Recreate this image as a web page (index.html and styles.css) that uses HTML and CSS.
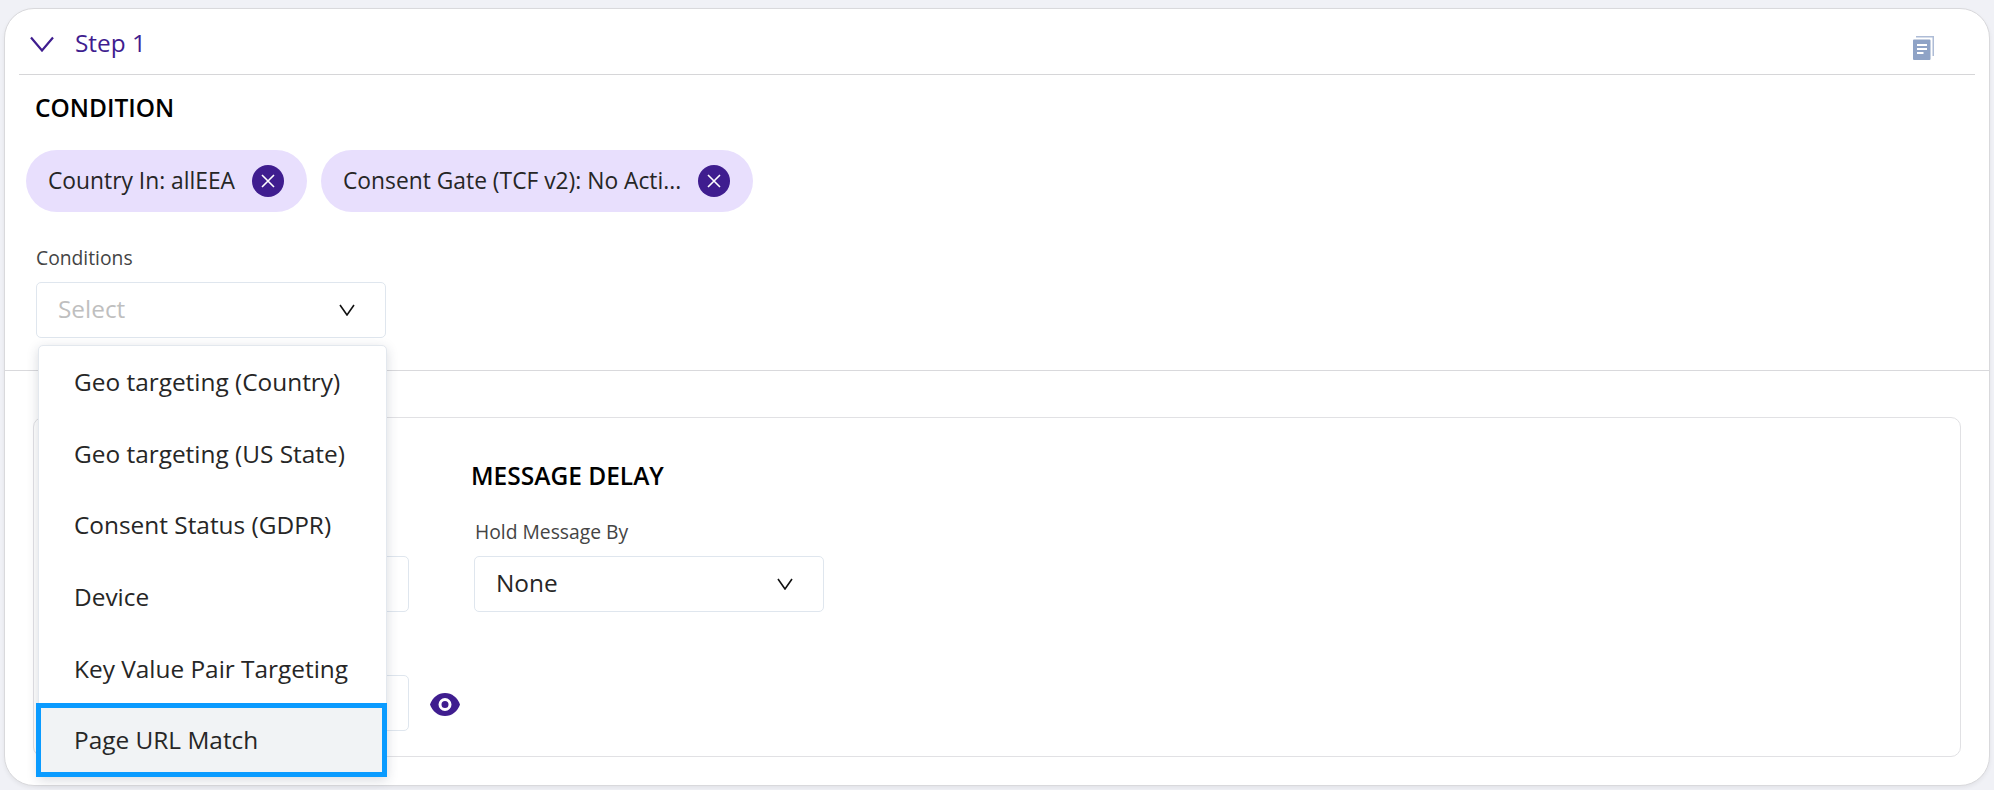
FILE: index.html
```html
<!DOCTYPE html>
<html lang="en">
<head>
<meta charset="utf-8">
<title>Step 1</title>
<link rel="stylesheet" href="styles.css">
</head>
<body>
<main class="card">
  <header class="step-head">
    <svg class="step-chevron" viewBox="0 0 24 16"><polyline points="1,1.5 12,14.5 23,1.5"/></svg>
    <span class="step-title">Step 1</span>
    <svg class="copy-icon" viewBox="0 0 23 25">
      <path class="copy-back" d="M3 1h18v20h-1.5V2.5H3z"/>
      <path class="copy-mid" d="M0 5.5a1 1 0 0 1 1-1h15.500a1 1 0 0 1 1 1v18.500a1 1 0 0 1-1 1H1a1 1 0 0 1-1-1z"/>
      <path class="copy-lines" d="M4 9h10v2H4zM4 13h10v2H4zM4 17h6.500v2H4z"/>
    </svg>
  </header>

  <section class="condition">
    <h2 class="heading">CONDITION</h2>
    <div class="chips">
      <div class="chip">
        <span class="chip-text">Country In: allEEA</span>
        <button class="chip-x" type="button"><svg viewBox="0 0 32 32"><path d="M10 10l12 12M22 10l-12 12"/></svg></button>
      </div>
      <div class="chip">
        <span class="chip-text">Consent Gate (TCF v2): No Acti...</span>
        <button class="chip-x" type="button"><svg viewBox="0 0 32 32"><path d="M10 10l12 12M22 10l-12 12"/></svg></button>
      </div>
    </div>
    <label class="field-label">Conditions</label>
    <div class="select-wrap">
      <div class="select">
        <span class="placeholder">Select</span>
        <svg class="select-chevron" viewBox="0 0 16 12"><polyline points="1,1 8,11 15,1"/></svg>
      </div>
      <ul class="menu">
        <li class="menu-item">Geo targeting (Country)</li>
        <li class="menu-item">Geo targeting (US State)</li>
        <li class="menu-item">Consent Status (GDPR)</li>
        <li class="menu-item">Device</li>
        <li class="menu-item">Key Value Pair Targeting</li>
        <li class="menu-item menu-item-active">Page URL Match</li>
      </ul>
    </div>
  </section>

  <section class="panel">
    <div class="col-left">
      <div class="select select-empty"></div>
      <div class="row-eye">
        <div class="select select-empty"></div>
        <svg class="eye" viewBox="0 0 30 23">
          <path class="eye-shape" d="M15 0C8 0 2.500 4.700 0 11.500 2.500 18.300 8 23 15 23s12.500-4.700 15-11.500C27.500 4.700 22 0 15 0z"/>
          <circle class="eye-ring" cx="15" cy="11.500" r="5"/>
        </svg>
      </div>
    </div>
    <div class="col-right">
      <h2 class="heading heading-delay">MESSAGE DELAY</h2>
      <label class="field-label">Hold Message By</label>
      <div class="select">
        <span class="value">None</span>
        <svg class="select-chevron" viewBox="0 0 16 12"><polyline points="1,1 8,11 15,1"/></svg>
      </div>
    </div>
  </section>
</main>
</body>
</html>
```
FILE: styles.css
```css
* { box-sizing: border-box; }
html, body { height: 100%; }
body {
  margin: 0;
  padding: 8px 4px 4px;
  background: #f0f1f6;
  font-family: "Open Sans", "Noto Sans", sans-serif;
  color: #262626;
  overflow: hidden;
}
.card {
  width: 1986px;
  height: 778px;
  background: #fff;
  border: 1px solid #d9d9dc;
  border-radius: 30px;
  box-shadow: 0 2px 4px rgba(0, 0, 0, 0.06);
}
.step-head {
  height: 66px;
  margin: 0 14px;
  padding-left: 11px;
  padding-right: 39px;
  border-bottom: 1px solid #d6d6d8;
  display: flex;
  align-items: center;
}
.step-chevron { width: 24px; height: 16px; margin-top: 4px; }
.step-chevron polyline { fill: none; stroke: #3f1d8f; stroke-width: 2.200; }
.step-title {
  margin-left: 21px;
  margin-top: 2px;
  font-size: 24.400px;
  color: #3f1d8f;
}
.copy-icon { width: 23px; height: 25px; margin-left: auto; margin-top: 12px; }
.copy-back { fill: #aebcd6; }
.copy-mid { fill: #8fa3c6; }
.copy-lines { fill: #fff; }

.condition {
  padding: 18px 0 32px;
  border-bottom: 1px solid #d9d9dc;
  height: 296px;
}
.heading {
  margin: 0;
  font-size: 24.500px;
  line-height: 30px;
  font-weight: 600;
  color: #000;
}
.condition .heading { margin-left: 30px; }
.chips {
  display: flex;
  gap: 14px;
  margin: 27px 0 0 21px;
}
.chip {
  height: 62px;
  padding: 0 23px 0 22px;
  border-radius: 31px;
  background: #e8dffd;
  display: flex;
  align-items: center;
  gap: 17px;
  font-size: 22.800px;
}
.chip-text { margin-bottom: 2px; }
.chip-x {
  width: 32px;
  height: 32px;
  padding: 0;
  border: 0;
  border-radius: 50%;
  background: #3f1d8f;
  display: block;
}
.chip-x svg { display: block; width: 32px; height: 32px; }
.chip-x path { fill: none; stroke: #fff; stroke-width: 1.600; }

.field-label {
  display: block;
  font-size: 19.300px;
  line-height: 24px;
  color: #444;
}
.condition .field-label { margin: 34px 0 12px 31px; }
.select-wrap { position: relative; width: 350px; margin-left: 31px; }
.select {
  width: 350px;
  height: 56px;
  padding: 0 30px 0 21px;
  border: 1px solid #dfe6ee;
  border-radius: 5px;
  background: #fff;
  display: flex;
  align-items: center;
  justify-content: space-between;
  font-size: 24.400px;
}
.placeholder { color: #bfbfbf; margin-bottom: 3px; }
.value { color: #262626; margin-bottom: 3px; }
.select-chevron { width: 16px; height: 12px; }
.select-chevron polyline { fill: none; stroke: #111; stroke-width: 1.600; }

.menu {
  position: absolute;
  z-index: 2;
  top: 63px;
  left: 2px;
  width: 349px;
  margin: 0;
  padding: 0;
  list-style: none;
  background: #fff;
  border: 1px solid #e3e8ee;
  border-radius: 5px 5px 0 0;
  box-shadow: 0 3px 12px rgba(40, 50, 80, 0.18);
}
.menu-item {
  height: 71.600px;
  padding-left: 35px;
  display: flex;
  align-items: center;
  font-size: 24.400px;
}
.menu-item-active {
  height: 74px;
  margin: -1px -1px -1px -3px;
  padding-left: 33px;
  border: 5px solid #0a9bff;
  background: #f1f3f5;
}

.panel {
  width: 1928px;
  height: 340px;
  margin: 46px 0 0 28px;
  padding: 0 0 0 25px;
  border: 1px solid #e1e1e4;
  border-radius: 10px;
  display: flex;
  gap: 14px;
}
.col-left { padding-top: 138px; }
.row-eye {
  margin-top: 63px;
  display: flex;
  align-items: center;
  gap: 21px;
}
.eye { width: 30px; height: 23px; margin-top: 2px; }
.eye-shape { fill: #3f1d8f; }
.eye-ring { fill: none; stroke: #fff; stroke-width: 3; }
.col-right { padding-top: 43px; }
.heading-delay { margin-left: -3px; }
.col-right .field-label { margin: 29px 0 12px 1px; }
```
